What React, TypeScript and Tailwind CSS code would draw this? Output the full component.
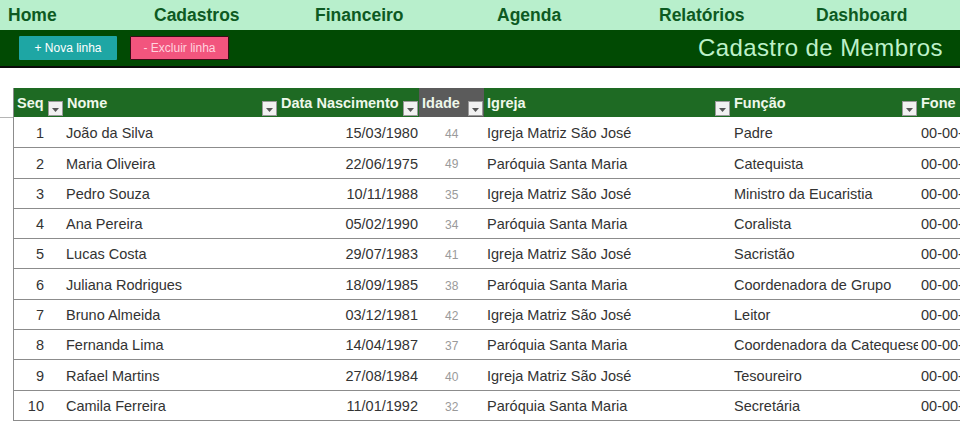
import React from 'react';

const nav = [
  { label: 'Home', w: 'w-[146px]' },
  { label: 'Cadastros', w: 'w-[161px]' },
  { label: 'Financeiro', w: 'w-[182px]' },
  { label: 'Agenda', w: 'w-[162px]' },
  { label: 'Relatórios', w: 'w-[157px]' },
  { label: 'Dashboard', w: 'w-[140px]' },
];

const rows = [
  ['1', 'João da Silva', '15/03/1980', '44', 'Igreja Matriz São José', 'Padre'],
  ['2', 'Maria Oliveira', '22/06/1975', '49', 'Paróquia Santa Maria', 'Catequista'],
  ['3', 'Pedro Souza', '10/11/1988', '35', 'Igreja Matriz São José', 'Ministro da Eucaristia'],
  ['4', 'Ana Pereira', '05/02/1990', '34', 'Paróquia Santa Maria', 'Coralista'],
  ['5', 'Lucas Costa', '29/07/1983', '41', 'Igreja Matriz São José', 'Sacristão'],
  ['6', 'Juliana Rodrigues', '18/09/1985', '38', 'Paróquia Santa Maria', 'Coordenadora de Grupo'],
  ['7', 'Bruno Almeida', '03/12/1981', '42', 'Igreja Matriz São José', 'Leitor'],
  ['8', 'Fernanda Lima', '14/04/1987', '37', 'Paróquia Santa Maria', 'Coordenadora da Catequese'],
  ['9', 'Rafael Martins', '27/08/1984', '40', 'Igreja Matriz São José', 'Tesoureiro'],
  ['10', 'Camila Ferreira', '11/01/1992', '32', 'Paróquia Santa Maria', 'Secretária'],
];

const cols = 'grid grid-cols-[50px_214px_141px_65px_247px_187px_120px]';

const FilterBtn = () => (
  <span className="w-[15px] h-[15px] bg-[#f1f1f1] border border-[#9a9a9a] flex items-end justify-center pb-[3px] shrink-0">
    <svg width="7" height="4" viewBox="0 0 7 4">
      <path d="M0 0h7L3.5 4z" fill="#555" />
    </svg>
  </span>
);

const HeadCell = ({ label, dark }: { label: string; dark?: boolean }) => (
  <div className={`flex items-center justify-between pl-[3px] pr-[1px] pt-[6px] ${dark ? 'bg-[#5b5b5b]' : ''}`}>
    <span className="text-[14.5px] font-bold text-[#eef8ea] self-start leading-[18px]">{label}</span>
    <span className="self-end mb-[1px]"><FilterBtn /></span>
  </div>
);

export default function App() {
  return (
    <div className="w-[960px] h-[429px] overflow-hidden bg-white" style={{ fontFamily: '"Liberation Sans", Arial, sans-serif' }}>
      {/* Top nav */}
      <div className="h-[30px] bg-[#b8efcc] flex items-center pl-[8px]">
        {nav.map((n) => (
          <div key={n.label} className={`${n.w} shrink-0 text-[17.5px] font-bold text-[#0d5a22]`}>{n.label}</div>
        ))}
      </div>

      {/* Action bar */}
      <div className="h-[38px] bg-[#014a03] border-b-2 border-[#0a0a0a] flex items-center pl-[19px] pr-[17px]">
        <button className="w-[98px] h-[24px] bg-[#1ea6a4] text-white text-[12px] rounded-[1px]">+ Nova linha</button>
        <button className="ml-[13px] w-[99px] h-[24px] bg-[#f2557e] border border-[#3b0b16] text-[#ffd3de] text-[12px] rounded-[1px]">- Excluir linha</button>
        <div className="ml-auto text-[24px] text-[#bdf1c9] tracking-[0.4px]">Cadastro de Membros</div>
      </div>

      {/* Table */}
      <div className="pt-[20px] relative">
        <div className="absolute left-0 top-[49px] w-[13px] h-px bg-[#b5b5b5]" />
        <div className="ml-[13px] w-[1040px] border-l border-b border-[#8c8c8c]">
          <div className={`${cols} h-[29px] bg-[#1e6a23]`}>
            <HeadCell label="Seq" />
            <HeadCell label="Nome" />
            <HeadCell label="Data Nascimento" />
            <HeadCell label="Idade" dark />
            <HeadCell label="Igreja" />
            <HeadCell label="Função" />
            <div className="pl-[3px] pt-[6px] text-[14.5px] font-bold text-[#eef8ea] leading-[18px]">Fone</div>
          </div>
          {rows.map((r, i) => (
            <div key={i} className={`${cols} h-[30.3px] items-center pt-[3px] text-[14.5px] text-[#333] ${i > 0 ? 'border-t border-[#8c8c8c]' : ''}`}>
              <div className="text-right pr-[20px]">{r[0]}</div>
              <div className="pl-[2px] whitespace-nowrap overflow-hidden">{r[1]}</div>
              <div className="text-right pr-[1px]">{r[2]}</div>
              <div className="text-[12px] text-[#9a9a9a] pl-[26px]">{r[3]}</div>
              <div className="pl-[3px] whitespace-nowrap overflow-hidden">{r[4]}</div>
              <div className="pl-[3px] whitespace-nowrap overflow-hidden">{r[5]}</div>
              <div className="pl-[3px] whitespace-nowrap">00-00-<span className="text-[#c9b13a]">0</span>000</div>
            </div>
          ))}
        </div>
      </div>
    </div>
  );
}
